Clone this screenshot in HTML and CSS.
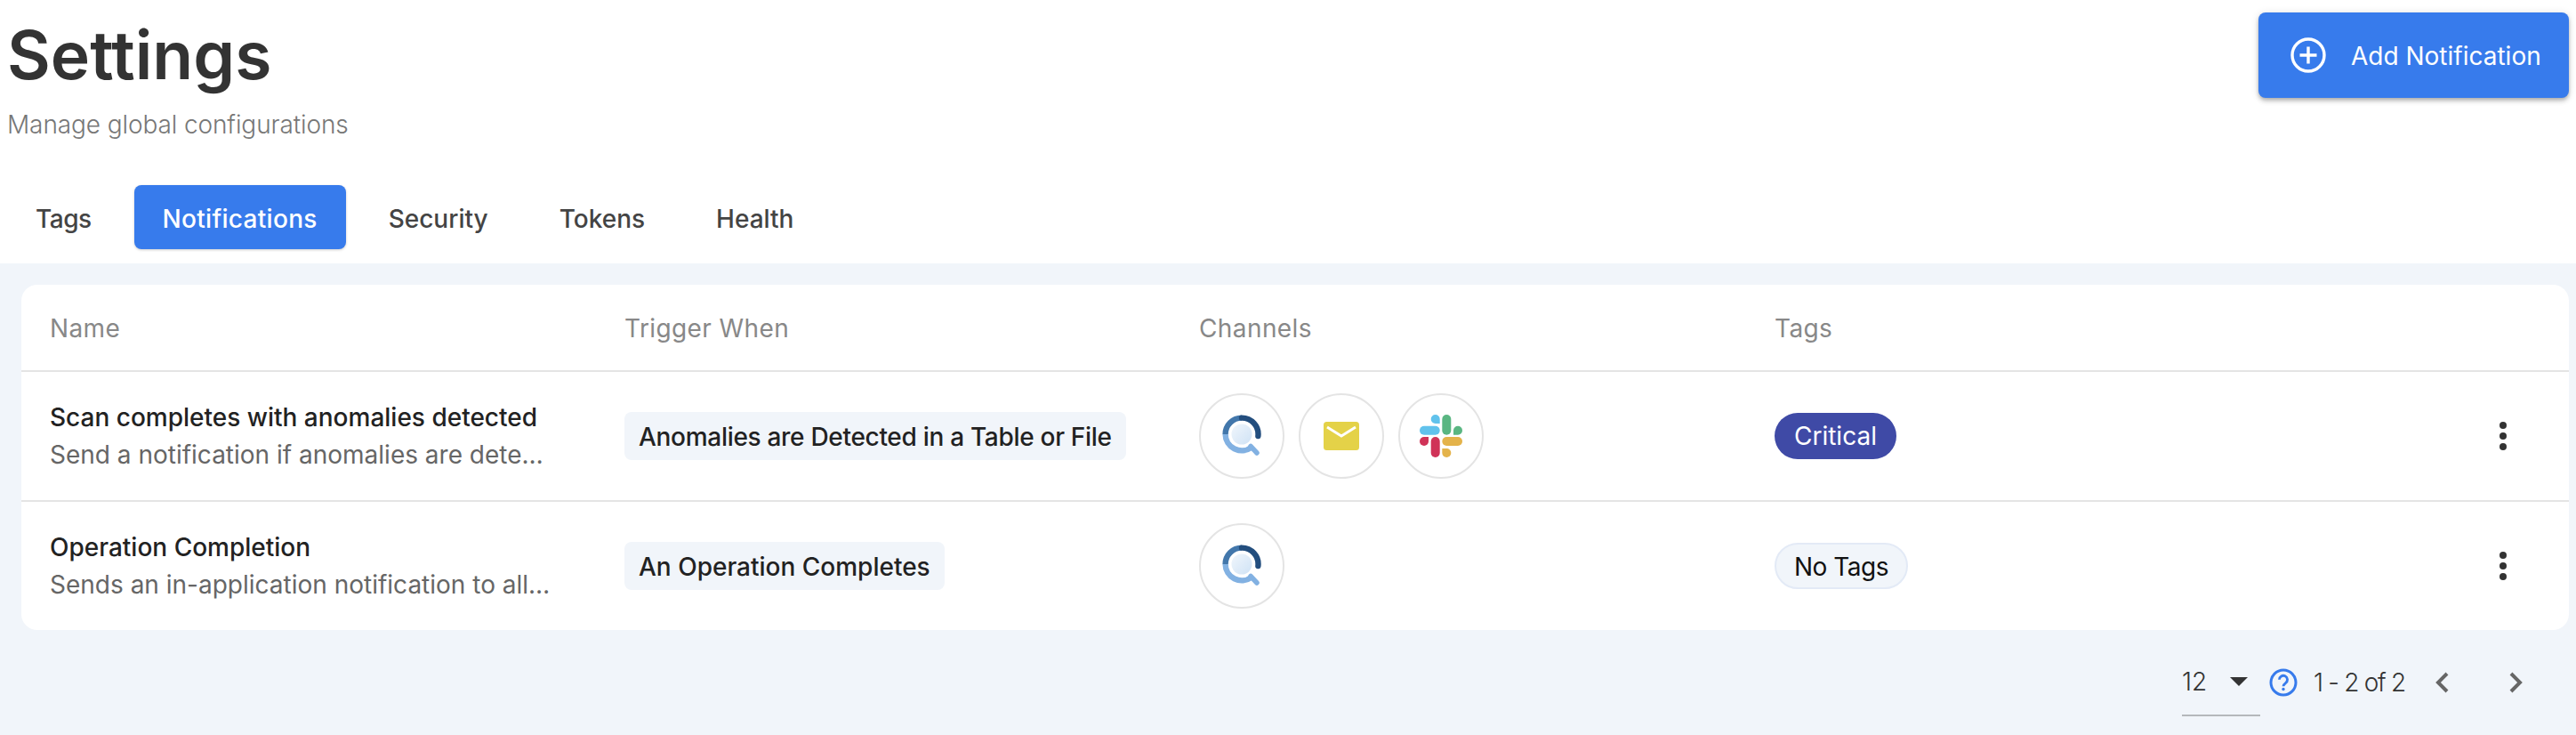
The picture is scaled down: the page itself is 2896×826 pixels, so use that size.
FILE: index.html
```html
<!DOCTYPE html>
<html lang="en">
<head>
    <meta charset="UTF-8">
    <title>Settings</title>
    <link rel="stylesheet" href="styles.css">
</head>
<body>
    <svg class="defs" width="0" height="0">
        <defs>
            <linearGradient id="lens" x1="0" y1="0" x2="1" y2="1">
                <stop offset="0" stop-color="#f0f6fc"/>
                <stop offset="1" stop-color="#cfe2f5"/>
            </linearGradient>
            <symbol id="logo" viewBox="0 0 44 48">
                <circle cx="22" cy="22" r="11.5" fill="url(#lens)"/>
                <path d="M32 35.5 39 43" fill="none" stroke="#82b1e2" stroke-width="5.5" stroke-linecap="round"/>
                <path d="M3.6 22A18.4 18.4 0 0 0 33 36.7" fill="none" stroke="#82b1e2" stroke-width="6.4"/>
                <path d="M22 3.6A18.4 18.4 0 0 0 3.6 22" fill="none" stroke="#4277ab" stroke-width="6.4"/>
                <path d="M22 3.6A18.4 18.4 0 0 1 40.4 24" fill="none" stroke="#234e7e" stroke-width="6.4" stroke-linecap="round"/>
            </symbol>
            <symbol id="kebab" viewBox="0 0 12 36">
                <circle cx="6" cy="6" r="4" fill="#333"/>
                <circle cx="6" cy="18" r="4" fill="#333"/>
                <circle cx="6" cy="30" r="4" fill="#333"/>
            </symbol>
        </defs>
    </svg>

    <div class="top">
        <div class="header">
            <div class="heading">
                <h1>Settings</h1>
                <p>Manage global configurations</p>
            </div>
            <button class="add-btn">
                <svg width="40" height="40" viewBox="0 0 40 40" fill="none" stroke="#fff" stroke-width="3.4">
                    <circle cx="20" cy="20" r="18"/>
                    <path d="M20 10.5v19M10.500 20h19"/>
                </svg>
                <span>Add Notification</span>
            </button>
        </div>
        <div class="tabs">
            <div class="tab first">Tags</div>
            <div class="tab active">Notifications</div>
            <div class="tab">Security</div>
            <div class="tab">Tokens</div>
            <div class="tab">Health</div>
        </div>
    </div>

    <div class="content">
        <div class="card">
            <div class="row head">
                <div>Name</div>
                <div>Trigger When</div>
                <div>Channels</div>
                <div>Tags</div>
            </div>

            <div class="row">
                <div class="name">
                    <div class="title">Scan completes with anomalies detected</div>
                    <div class="desc">Send a notification if anomalies are dete…</div>
                </div>
                <div><span class="trigger tight">Anomalies are Detected in a Table or File</span></div>
                <div class="channels">
                    <div class="channel"><svg width="44" height="48"><use href="#logo"/></svg></div>
                    <div class="channel">
                        <svg width="40" height="32" viewBox="0 0 40 32">
                            <rect width="40" height="32" rx="3.500" fill="#e4d248"/>
                            <path d="M4 6 20 16 36 6" fill="none" stroke="#fff" stroke-width="3"/>
                        </svg>
                    </div>
                    <div class="channel">
                        <svg width="48" height="48" viewBox="0 0 48 48">
                            <path d="M22.700 10H17.700A5 5 0 1 1 22.700 5Z" fill="#61c2ec"/>
                            <rect x="0" y="12.700" width="22.700" height="10" rx="5" fill="#61c2ec"/>
                            <rect x="25.300" y="0" width="10" height="22.700" rx="5" fill="#5ab682"/>
                            <path d="M38 22.700V17.700A5 5 0 1 1 43 22.700Z" fill="#5ab682"/>
                            <path d="M10 25V30A5 5 0 1 1 5 25Z" fill="#d03358"/>
                            <rect x="12.700" y="25" width="10" height="23" rx="5" fill="#d03358"/>
                            <rect x="25.300" y="25" width="22.700" height="10" rx="5" fill="#e4b34b"/>
                            <path d="M25.300 38H30.300A5 5 0 1 1 25.300 43Z" fill="#e4b34b"/>
                        </svg>
                    </div>
                </div>
                <div><span class="tag critical">Critical</span></div>
                <svg class="more" width="12" height="36"><use href="#kebab"/></svg>
            </div>

            <div class="row last">
                <div class="name">
                    <div class="title">Operation Completion</div>
                    <div class="desc">Sends an in-application notification to all…</div>
                </div>
                <div><span class="trigger">An Operation Completes</span></div>
                <div class="channels">
                    <div class="channel"><svg width="44" height="48"><use href="#logo"/></svg></div>
                </div>
                <div><span class="tag none">No Tags</span></div>
                <svg class="more" width="12" height="36"><use href="#kebab"/></svg>
            </div>
        </div>

        <div class="pager">
            <div class="per-page">
                <span>12</span>
                <i class="caret"></i>
            </div>
            <svg class="help" width="32" height="32" viewBox="0 0 32 32" fill="none">
                <circle cx="16" cy="16" r="14" stroke="#377bec" stroke-width="3"/>
                <path d="M11.500 12.800a4.500 4.500 0 1 1 7.200 3.600c-1.700 1.300-2.700 2-2.700 3.800" stroke="#377bec" stroke-width="2.800"/>
                <circle cx="16" cy="23.500" r="1.700" fill="#377bec"/>
            </svg>
            <span class="count">1 - 2 of 2</span>
            <svg class="arrow prev" width="18" height="26" viewBox="0 0 18 26" fill="none">
                <path d="M15 3 5 13l10 10" stroke="#666" stroke-width="4"/>
            </svg>
            <svg class="arrow" width="18" height="26" viewBox="0 0 18 26" fill="none">
                <path d="M3 3l10 10L3 23" stroke="#666" stroke-width="4"/>
            </svg>
        </div>
    </div>
</body>
</html>
```

FILE: styles.css
```css
*{
    box-sizing: border-box;
}
html, body{
    height: 100%;
}
body{
    margin: 0;
    font-family: 'Inter', sans-serif;
    font-size: 28px;
    background-color: #f1f5fa;
    color: #222;
    overflow: hidden;
}
.defs{
    display: block;
    height: 0;
}
.top{
    background-color: #fff;
    height: 296px;
    padding: 14px 8px 0 8px;
}
.header{
    display: flex;
    justify-content: space-between;
    align-items: flex-start;
    height: 194px;
}
.heading h1{
    margin: 0;
    font-size: 75px;
    font-weight: 600;
    line-height: 96px;
    color: #333;
}
.heading p{
    margin: 12px 0 0 0;
    font-size: 28px;
    font-weight: 300;
    line-height: 36px;
    letter-spacing: -0.1px;
    color: #777;
}
.add-btn{
    display: flex;
    align-items: center;
    gap: 28px;
    height: 96px;
    width: 349px;
    padding: 0 0 0 36px;
    border: none;
    border-radius: 8px;
    background-color: #377bec;
    color: #fff;
    font-family: inherit;
    font-size: 28px;
    font-weight: 400;
    box-shadow: 0 2px 4px -1px rgba(0, 0, 0, 0.2), 0 4px 5px rgba(0, 0, 0, 0.14), 0 1px 10px rgba(0, 0, 0, 0.12);
}
.add-btn span{
    padding-top: 2px;
}
.tabs{
    display: flex;
    gap: 16px;
}
.tab{
    height: 72px;
    line-height: 76px;
    padding: 0 32px;
    border-radius: 8px;
    font-weight: 500;
    color: #444;
}
.tab.first{
    letter-spacing: -0.5px;
}
.tab.active{
    background-color: #377bec;
    color: #fff;
    letter-spacing: 0.3px;
    box-shadow: 0 1px 3px rgba(0, 0, 0, 0.2);
}
.content{
    padding: 24px 8px 0 24px;
}
.card{
    background-color: #fff;
    border-radius: 18px;
    overflow: hidden;
}
.row{
    display: grid;
    grid-template-columns: 646px 646px 647px 1fr 12px;
    align-items: center;
    height: 146px;
    padding: 0 68px 0 32px;
    border-bottom: 2px solid #e4e4e4;
}
.row.head{
    height: 98px;
    padding-top: 2px;
    color: #888;
    font-weight: 400;
    letter-spacing: 0.4px;
}
.row.last{
    height: 144px;
    border-bottom: none;
}
.name{
    width: 600px;
}
.title{
    font-weight: 500;
    line-height: 40px;
    color: #222;
    white-space: nowrap;
}
.desc{
    padding-top: 2px;
    line-height: 40px;
    color: #666;
    white-space: nowrap;
}
.trigger{
    display: inline-block;
    height: 54px;
    line-height: 56px;
    padding: 0 16px;
    border-radius: 8px;
    background-color: #f1f5fa;
    font-weight: 500;
    color: #222;
}
.trigger.tight{
    letter-spacing: -0.3px;
}
.channels{
    display: flex;
    gap: 16px;
}
.channel{
    display: flex;
    align-items: center;
    justify-content: center;
    width: 96px;
    height: 96px;
    border-radius: 50%;
    border: 2px solid #e4e4e4;
}
.tag{
    display: inline-block;
    height: 52px;
    line-height: 52px;
    padding: 0 22px;
    border-radius: 26px;
}
.tag.critical{
    background-color: #3f4aa6;
    color: #fff;
}
.tag.none{
    line-height: 50px;
    padding: 0 20px;
    letter-spacing: -0.5px;
    background-color: #f1f5fa;
    border: 2px solid #e3eaf6;
    color: #111;
}
.pager{
    display: flex;
    align-items: center;
    height: 96px;
    padding-left: 2429px;
    padding-top: 22px;
    color: #333;
}
.per-page{
    display: flex;
    align-items: center;
    justify-content: space-between;
    width: 88px;
    height: 60px;
    padding: 0 14px 0 0;
    margin-top: 16px;
    border-bottom: 2px solid #b5b8bb;
    font-weight: 300;
}
.per-page span{
    margin-top: -16px;
}
.caret{
    width: 0;
    height: 0;
    margin-top: -16px;
    border-left: 10px solid transparent;
    border-right: 10px solid transparent;
    border-top: 10px solid #333;
}
.help{
    margin-left: 10px;
}
.count{
    margin-left: 18px;
    font-weight: 300;
    letter-spacing: -1.3px;
}
.arrow{
    margin-left: 66px;
}
.arrow.prev{
    margin-left: 32px;
}
```
